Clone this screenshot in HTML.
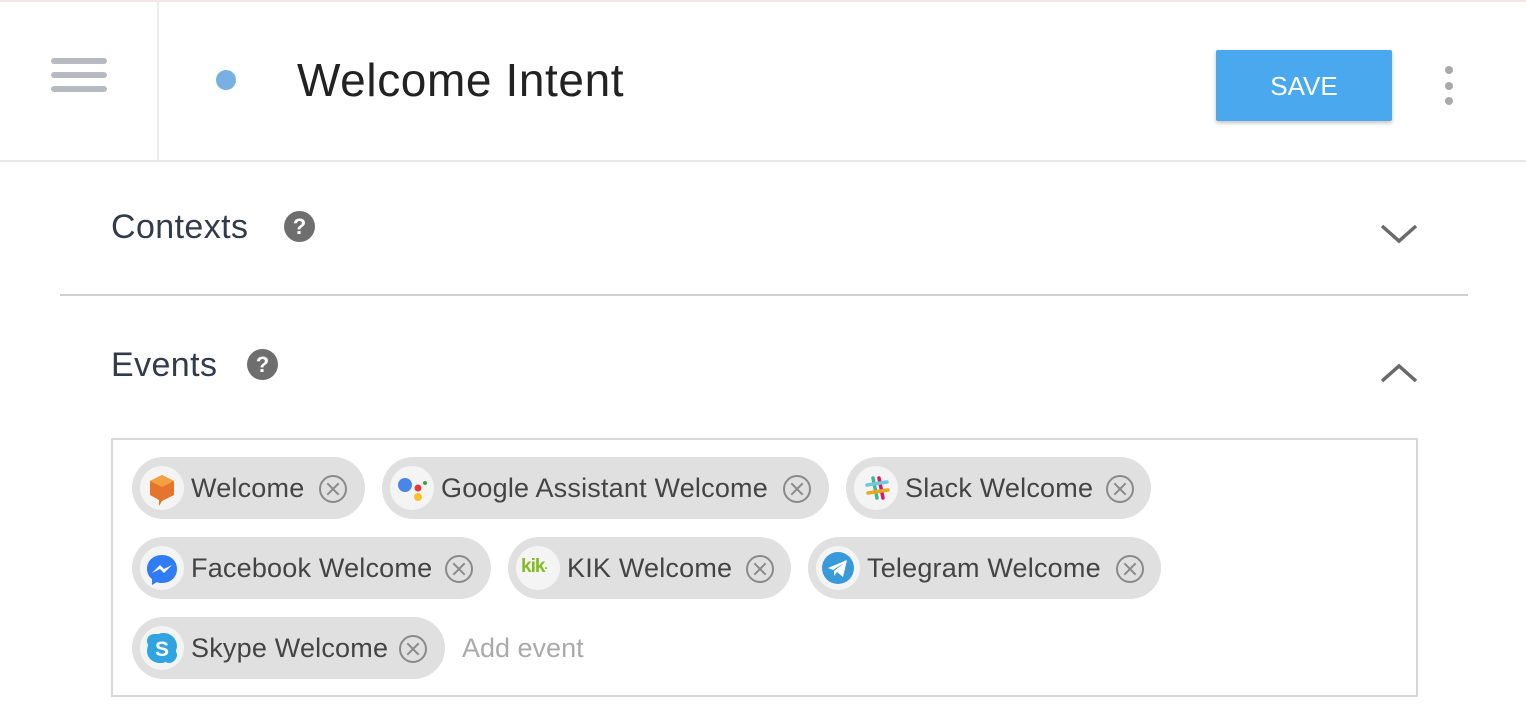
<!DOCTYPE html>
<html><head><meta charset="utf-8"><style>
*{margin:0;padding:0;box-sizing:border-box}
body{width:1526px;height:710px;background:#fff;font-family:"Liberation Sans",sans-serif;position:relative;overflow:hidden}
.a{position:absolute}
.chip{position:absolute;height:62px;border-radius:31px;background:#e0e0e0}
.chip .ic{position:absolute;left:8px;top:9px;width:44px;height:44px;border-radius:50%;background:#f4f4f4;overflow:hidden}
.chip .t{position:absolute;left:59px;top:16px;font-size:27px;color:#444;white-space:nowrap;letter-spacing:0.2px}
.chip .x{position:absolute;top:18px;width:28px;height:28px;border:2px solid #8a8a8a;border-radius:50%}
.chip .x:before,.chip .x:after{content:"";position:absolute;left:4px;top:11px;width:16px;height:2px;background:#8a8a8a;transform:rotate(45deg)}
.chip .x:after{transform:rotate(-45deg)}
.h{font-size:34px;color:#333a4a;letter-spacing:0.4px}
.q{width:31px;height:31px;border-radius:50%;background:#6e6e6e;color:#fff;font-weight:bold;font-size:22px;text-align:center;line-height:31px}
</style></head><body>
<div class="a" style="left:0;top:0;width:1526px;height:2px;background:#f6e4e6"></div>
<div class="a" style="left:0;top:160px;width:1526px;height:2px;background:#e8e8e8"></div>
<div class="a" style="left:157px;top:2px;width:2px;height:158px;background:#ececec"></div>
<div class="a" style="left:51px;top:58px;width:56px;height:6px;border-radius:3px;background:#b8bac2"></div>
<div class="a" style="left:51px;top:72px;width:56px;height:6px;border-radius:3px;background:#b8bac2"></div>
<div class="a" style="left:51px;top:86px;width:56px;height:6px;border-radius:3px;background:#b8bac2"></div>
<div class="a" style="left:216px;top:70px;width:20px;height:20px;border-radius:50%;background:#78b0e2"></div>
<div class="a" style="left:297px;top:53px;font-size:46px;color:#222;letter-spacing:0.6px">Welcome Intent</div>
<div class="a" style="left:1216px;top:50px;width:176px;height:71px;background:#4aa8ef;color:#fff;font-size:26px;text-align:center;line-height:72px;box-shadow:0 2px 4px rgba(0,0,0,.25);border-radius:2px">SAVE</div>
<div class="a" style="left:1445px;top:66px;width:8px;height:8px;border-radius:50%;background:#aaa"></div>
<div class="a" style="left:1445px;top:82px;width:8px;height:8px;border-radius:50%;background:#aaa"></div>
<div class="a" style="left:1445px;top:97px;width:8px;height:8px;border-radius:50%;background:#aaa"></div>

<div class="a h" style="left:111px;top:208px">Contexts</div>
<div class="a q" style="left:284px;top:211px">?</div>
<svg class="a" style="left:1380px;top:222px" width="38" height="22"><path d="M2 4 L19 19 L36 4" fill="none" stroke="#6a6a6a" stroke-width="3.5"/></svg>
<div class="a" style="left:60px;top:294px;width:1408px;height:2px;background:#d0d0d0"></div>
<div class="a h" style="left:111px;top:346px">Events</div>
<div class="a q" style="left:247px;top:349px">?</div>
<svg class="a" style="left:1380px;top:362px" width="38" height="22"><path d="M2 19 L19 4 L36 19" fill="none" stroke="#6a6a6a" stroke-width="3.5"/></svg>

<div class="a" style="left:111px;top:438px;width:1307px;height:259px;border:2px solid #d8d8d8"></div>

<div class="chip" style="left:132px;top:457px;width:233px"><div class="ic"><svg width="44" height="44"><path d="M22 9 L34 15 L34 29 L22 35 L19 40 L19 34 L10 29 L10 15 Z" fill="#e5742d"/><path d="M22 9 L34 15 L22 21 L10 15 Z" fill="#f2a040"/></svg></div><div class="t">Welcome</div><div class="x" style="left:187px"></div></div>
<div class="chip" style="left:382px;top:457px;width:447px"><div class="ic"><svg width="44" height="44"><circle cx="15" cy="19" r="7" fill="#4a86e8"/><circle cx="28" cy="22" r="3.5" fill="#e53935"/><circle cx="28" cy="31" r="4" fill="#fbc02d"/><circle cx="35" cy="17" r="2" fill="#43a047"/></svg></div><div class="t">Google Assistant Welcome</div><div class="x" style="left:401px"></div></div>
<div class="chip" style="left:846px;top:457px;width:305px"><div class="ic"><svg width="44" height="44"><g stroke-width="3.5" stroke-linecap="round"><path d="M19 12 L23 32" stroke="#3eb991"/><path d="M25 12 L29 32" stroke="#e01563"/><path d="M13 19 L33 16" stroke="#6ecadc"/><path d="M14 27 L34 24" stroke="#e9a820"/></g></svg></div><div class="t">Slack Welcome</div><div class="x" style="left:260px"></div></div>

<div class="chip" style="left:132px;top:537px;width:359px"><div class="ic"><svg width="44" height="44"><path d="M22 9 C13 9 7 15 7 23 C7 27 9 31 12 33 L12 39 L17 36 C19 37 20 37 22 37 C31 37 37 31 37 23 C37 15 31 9 22 9Z" fill="#2f7cf6"/><path d="M12 27 L20 19 L24 23 L32 19 L24 27 L20 23 Z" fill="#fff"/></svg></div><div class="t">Facebook Welcome</div><div class="x" style="left:313px"></div></div>
<div class="chip" style="left:508px;top:537px;width:283px"><div class="ic"><div style="position:absolute;left:5px;top:10px;font-size:19px;font-weight:bold;color:#82bc23;letter-spacing:-1px">kik<span style="font-size:12px">·</span></div></div><div class="t">KIK Welcome</div><div class="x" style="left:238px"></div></div>
<div class="chip" style="left:808px;top:537px;width:353px"><div class="ic"><svg width="44" height="44"><circle cx="22" cy="22" r="16" fill="#3a9ad9"/><path d="M12 22 L31 14 L27 31 L21 26 L18 30 L18 25 L28 17 L17 24 Z" fill="#fff"/></svg></div><div class="t">Telegram Welcome</div><div class="x" style="left:308px"></div></div>

<div class="chip" style="left:132px;top:617px;width:313px"><div class="ic"><svg width="44" height="44"><path d="M15 8 C10 8 7 11 7 15 C7 17 8 18 8 19 C8 20 7 22 7 25 C7 32 13 37 20 37 C22 37 24 37 25 36 C26 36 27 37 29 37 C33 37 37 33 37 29 C37 27 36 26 36 25 C36 24 37 22 37 20 C37 13 31 7 24 7 C22 7 20 7 19 8 C18 8 17 8 15 8Z" fill="#2fa4e0"/><text x="22" y="30" text-anchor="middle" font-size="21" font-weight="bold" fill="#fff" font-family="Liberation Sans">S</text></svg></div><div class="t">Skype Welcome</div><div class="x" style="left:267px"></div></div>
<div class="a" style="left:462px;top:633px;font-size:27px;color:#aaa">Add event</div>
</body></html>
